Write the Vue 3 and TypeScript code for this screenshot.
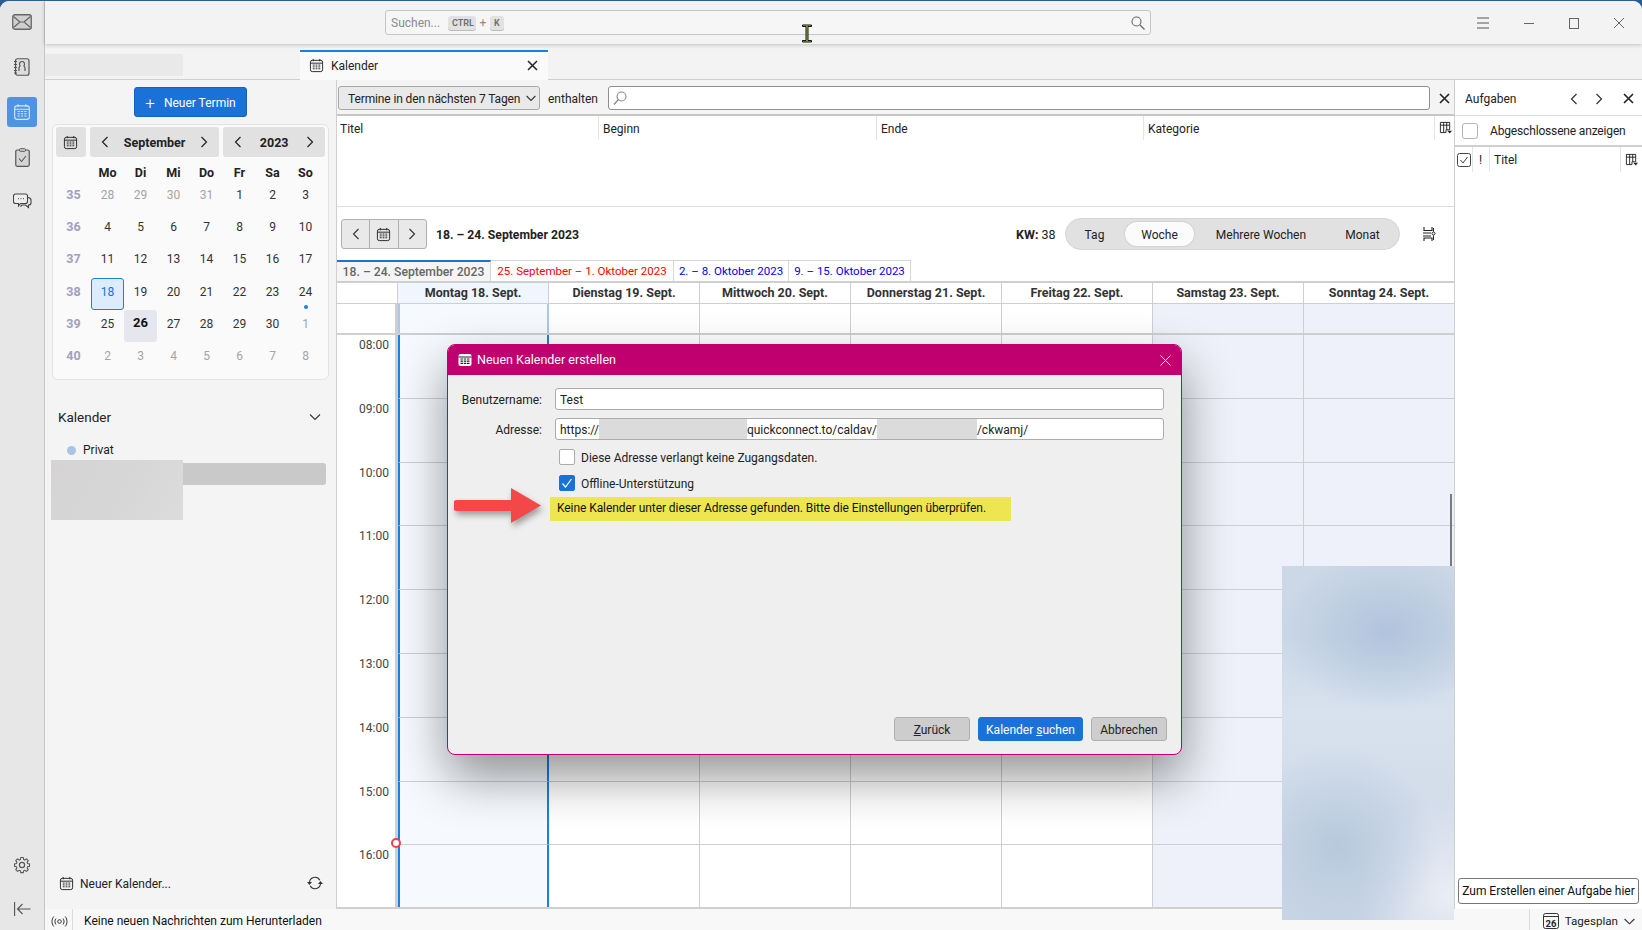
<script setup lang="ts">
const weeks = [
  { kw: 35, days: [[28, 1], [29, 1], [30, 1], [31, 1], [1], [2], [3]] },
  { kw: 36, days: [[4], [5], [6], [7], [8], [9], [10]] },
  { kw: 37, days: [[11], [12], [13], [14], [15], [16], [17]] },
  { kw: 38, days: [[18, 2], [19], [20], [21], [22], [23], [24, 4]] },
  { kw: 39, days: [[25], [26, 3], [27], [28], [29], [30], [1, 1]] },
  { kw: 40, days: [[2, 1], [3, 1], [4, 1], [5, 1], [6, 1], [7, 1], [8, 1]] },
]
const dayClass: Record<number, string> = { 1: 'other', 2: 'sel', 3: 'today', 4: 'dot' }
const names = ['Mo', 'Di', 'Mi', 'Do', 'Fr', 'Sa', 'So']
const columns = ['Montag 18. Sept.', 'Dienstag 19. Sept.', 'Mittwoch 20. Sept.', 'Donnerstag 21. Sept.', 'Freitag 22. Sept.', 'Samstag 23. Sept.', 'Sonntag 24. Sept.']
const hours = ['08:00', '09:00', '10:00', '11:00', '12:00', '13:00', '14:00', '15:00', '16:00']
function colClass(i: number): string {
  return i === 0 ? 'mon' : i >= 5 ? 'wknd' : ''
}
</script>

<template>
  <div class="app">
    <svg class="defs" width="0" height="0">
      <symbol id="cal" viewBox="0 0 16 16">
        <rect x="1.5" y="2.5" width="13" height="12" rx="2" fill="none" stroke="currentColor" />
        <path d="M1.5 5.5h13M4.5 1v2.500M11.500 1v2.500" fill="none" stroke="currentColor" />
        <path d="M4 7.500h2M7 7.500h2M10 7.500h2M4 9.500h2M7 9.500h2M10 9.500h2M4 11.500h2M7 11.500h2M10 11.500h2" stroke="currentColor" fill="none" />
      </symbol>
      <symbol id="cols" viewBox="0 0 14 14">
        <path d="M1.500 1.500h10v8h-4v3h-6zM1.500 4.500h10M5 1.500v11M8.300 1.500v8" fill="none" stroke="currentColor" />
        <path d="M9 10.500h5l-2.500 3z" fill="currentColor" />
      </symbol>
    </svg>

    <div class="window">
      <nav class="rail">
        <button class="rail-btn">
          <svg width="20" height="16" viewBox="0 0 20 16"><rect x="0.750" y="0.750" width="18.500" height="14.500" rx="2" fill="#d0d0d0" stroke="#666" stroke-width="1.300" /><path d="M1.500 2.500 8 8l-6.500 5.500M18.500 2.500 12 8l6.500 5.500M8 8h4" fill="none" stroke="#666" stroke-width="1.200" /></svg>
        </button>
        <button class="rail-btn">
          <svg width="16" height="18" viewBox="0 0 16 18"><rect x="1.500" y="0.750" width="13.500" height="16.500" rx="2" fill="#ddd" stroke="#555" stroke-width="1.200" /><path d="M5 13v-3c0-1 .8-1.500 1-2-1.500-3 .5-4.500 2-4.500s3.500 1.500 2 4.500c.2.500 1 1 1 2v3" fill="none" stroke="#555" stroke-width="1.200" /><path d="M0 3.500h3M0 6.500h3M0 9.500h3M0 12.500h3M0 15h3" stroke="#555" /></svg>
        </button>
        <button class="rail-btn active">
          <svg width="18" height="18" viewBox="0 0 16 16" class="active-ico"><use href="#cal" /></svg>
        </button>
        <button class="rail-btn">
          <svg width="15" height="19" viewBox="0 0 15 19"><rect x="0.750" y="2" width="13.500" height="16.300" rx="1.500" fill="#d4d4d4" stroke="#555" stroke-width="1.200" /><rect x="4.500" y="0.700" width="6" height="2.600" rx="1" fill="#d4d4d4" stroke="#555" /><path d="m4 10.500 2.500 3 4.500-5.500" fill="none" stroke="#555" stroke-width="1.100" /></svg>
        </button>
        <button class="rail-btn">
          <svg width="19" height="18" viewBox="0 0 19 18"><path d="M2.500 1h10a2 2 0 0 1 2 2v5.500a2 2 0 0 1-2 2h-5l-2 2.500v-2.500h-3a2 2 0 0 1-2-2V3a2 2 0 0 1 2-2z" fill="#eee" stroke="#444" stroke-width="1.100" /><path d="M15 4.500c1.800.2 3 1 3 2.500v3c0 1.300-1 2-2.500 2v2.500l-3-2.500H9l-1.500 1.500" fill="none" stroke="#444" stroke-width="1.100" /><path d="M5 5.700h1M7.500 5.700h1M10 5.700h1" stroke="#444" /></svg>
        </button>
        <div class="rail-spacer"></div>
        <button class="rail-btn low">
          <svg width="18" height="18" viewBox="0 0 18 18"><path d="M7.600 1h2.800l.4 2.300 1.300.6 2-1.300 2 2-1.300 2 .6 1.300 2.100.4v2.800l-2.100.4-.6 1.300 1.300 2-2 2-2-1.300-1.300.6-.4 2.100H7.600l-.4-2.100-1.300-.6-2 1.300-2-2 1.300-2-.6-1.300-2.100-.4V8.300l2.100-.4.6-1.300-1.300-2 2-2 2 1.300 1.300-.6z" transform="translate(1.100 .6) scale(.88)" fill="none" stroke="#555" stroke-width="1.200" /><circle cx="9" cy="9" r="2.600" fill="none" stroke="#555" stroke-width="1.200" /></svg>
        </button>
        <button class="rail-btn low last">
          <svg width="17" height="14" viewBox="0 0 17 14"><path d="M.6 0v14M16.500 7H3.500M8.500 2 3.500 7l5 5" fill="none" stroke="#555" stroke-width="1.100" /></svg>
        </button>
      </nav>

      <div class="content">
        <header class="titlebar">
          <div class="searchbar">
            <span class="search-ph">Suchen...</span>
            <kbd class="key first">CTRL</kbd>
            <span class="plus">+</span>
            <kbd class="key">K</kbd>
            <svg class="search-ico" width="14" height="14" viewBox="0 0 14 14"><circle cx="5.500" cy="5.500" r="4.500" fill="none" stroke="#666" stroke-width="1.100" /><path d="m9 9 4.500 4.500" stroke="#666" stroke-width="1.300" /></svg>
          </div>
          <div class="winctl">
            <svg width="14" height="12" viewBox="0 0 14 12"><path d="M1 1h12M1 6h12M1 11h12" stroke="#555" /></svg>
            <svg width="12" height="12" viewBox="0 0 12 12"><path d="M1 6.500h10" stroke="#666" /></svg>
            <svg width="12" height="12" viewBox="0 0 12 12"><rect x="1.500" y="1.500" width="9" height="10" fill="none" stroke="#666" /></svg>
            <svg width="12" height="12" viewBox="0 0 12 12"><path d="m1 1 10 10M11 1 1 11" stroke="#666" /></svg>
          </div>
        </header>

        <div class="tabbar">
          <div class="tab-redacted"></div>
          <div class="tab">
            <svg width="15" height="15"><use href="#cal" /></svg>
            <span class="tab-label">Kalender</span>
            <svg class="tab-x" width="11" height="11" viewBox="0 0 11 11"><path d="m1 1 9 9M10 1l-9 9" stroke="#222" stroke-width="1.500" /></svg>
          </div>
        </div>

        <div class="workspace">
          <aside class="sidebar">
            <button class="new-event"><span class="plus-ico">+</span>Neuer Termin</button>
            <section class="minimonth">
              <div class="mm-top">
                <button class="mm-today"><svg width="15" height="15"><use href="#cal" /></svg></button>
                <div class="mm-nav month">
                  <svg class="chev" width="8" height="12" viewBox="0 0 8 12"><path d="M6.500 1 1.500 6l5 5" fill="none" stroke="#222" stroke-width="1.200" /></svg>
                  <span class="mm-label">September</span>
                  <svg class="chev" width="8" height="12" viewBox="0 0 8 12"><path d="m1.500 1 5 5-5 5" fill="none" stroke="#222" stroke-width="1.200" /></svg>
                </div>
                <div class="mm-nav year">
                  <svg class="chev" width="8" height="12" viewBox="0 0 8 12"><path d="M6.500 1 1.500 6l5 5" fill="none" stroke="#222" stroke-width="1.200" /></svg>
                  <span class="mm-label">2023</span>
                  <svg class="chev" width="8" height="12" viewBox="0 0 8 12"><path d="m1.500 1 5 5-5 5" fill="none" stroke="#222" stroke-width="1.200" /></svg>
                </div>
              </div>
              <div class="mm-grid">
                <span></span>
                <span v-for="n in names" :key="n" class="mm-name">{{ n }}</span>
                <template v-for="w in weeks" :key="w.kw">
                  <span class="mm-kw">{{ w.kw }}</span>
                  <span v-for="(d, i) in w.days" :key="i" class="mm-day" :class="dayClass[d[1] ?? 0]">{{ d[0] }}</span>
                </template>
              </div>
            </section>

            <div class="cal-head">
              <span>Kalender</span>
              <svg width="12" height="8" viewBox="0 0 12 8"><path d="m1 1.500 5 5 5-5" fill="none" stroke="#333" stroke-width="1.100" /></svg>
            </div>
            <div class="cal-item"><i class="cal-dot"></i>Privat</div>
            <div class="cal-redact-wrap">
              <div class="cal-bar"></div>
              <div class="cal-blur"></div>
            </div>

            <div class="side-foot">
              <svg width="15" height="15"><use href="#cal" /></svg>
              <span class="side-foot-label">Neuer Kalender...</span>
              <svg width="16" height="14" viewBox="0 0 16 14"><path d="M2.500 7A5.500 5.500 0 0 1 12.800 4.200M13.500 7A5.500 5.500 0 0 1 3.200 9.800" fill="none" stroke="#333" stroke-width="1.100" /><path d="M0 6h5L2.500 9zM11 8h5l-2.500-3z" fill="#333" /></svg>
            </div>
          </aside>

          <main class="main">
            <div class="filter">
              <div class="select"><span>Termine in den nächsten 7 Tagen</span>
                <svg width="10" height="7" viewBox="0 0 10 7"><path d="m.6 1 4.400 4.500L9.400 1" fill="none" stroke="#333" stroke-width="1.100" /></svg>
              </div>
              <span class="contains">enthalten</span>
              <div class="filter-input">
                <svg width="14" height="14" viewBox="0 0 14 14"><circle cx="8.500" cy="5.500" r="4.500" fill="none" stroke="#888" stroke-width="1.100" /><path d="m5 9-4 4.500" stroke="#888" stroke-width="1.300" /></svg>
              </div>
              <svg class="filter-x" width="11" height="11" viewBox="0 0 11 11"><path d="m1 1 9 9M10 1l-9 9" stroke="#222" stroke-width="1.600" /></svg>
            </div>
            <div class="list">
              <div class="list-head">
                <span class="lc c1">Titel</span>
                <span class="lc c2">Beginn</span>
                <span class="lc c3">Ende</span>
                <span class="lc c4">Kategorie</span>
                <span class="lc c5"><svg width="13" height="13"><use href="#cols" /></svg></span>
              </div>
            </div>
            <div class="navrow">
              <div class="navbtns">
                <span class="navbtn"><svg width="8" height="12" viewBox="0 0 8 12"><path d="M6.500 1 1.500 6l5 5" fill="none" stroke="#333" stroke-width="1.100" /></svg></span>
                <span class="navbtn"><svg width="15" height="15"><use href="#cal" /></svg></span>
                <span class="navbtn"><svg width="8" height="12" viewBox="0 0 8 12"><path d="m1.500 1 5 5-5 5" fill="none" stroke="#333" stroke-width="1.100" /></svg></span>
              </div>
              <strong class="range">18. – 24. September 2023</strong>
              <span class="kw"><b>KW:</b> 38</span>
              <div class="views">
                <span class="view v-tag">Tag</span>
                <span class="view v-woche">Woche</span>
                <span class="view v-multi">Mehrere Wochen</span>
                <span class="view v-monat">Monat</span>
              </div>
              <svg class="layout-ico" width="13" height="14" viewBox="0 0 13 14"><path d="M1 0v3.500h8V0M0 6h8M0 9h8M1 14v-3h8v3" fill="none" stroke="#222" stroke-width="1.100" /><path d="M10.500 1v3.500M10.500 8.500V13" stroke="#222" /><circle cx="10.500" cy="6.500" r="1.500" fill="none" stroke="#222" /></svg>
            </div>
            <div class="weektabs">
              <span class="wt wt0">18. – 24. September 2023</span>
              <span class="wt wt1">25. September – 1. Oktober 2023</span>
              <span class="wt wt2">2. – 8. Oktober 2023</span>
              <span class="wt wt3">9. – 15. Oktober 2023</span>
            </div>
            <div class="week">
              <div class="w-row w-head">
                <div class="w-time"></div>
                <div v-for="(c, i) in columns" :key="c" class="w-cell" :class="i === 0 ? 'mon-head' : ''">{{ c }}</div>
              </div>
              <div class="w-row w-allday">
                <div class="w-time"></div>
                <div v-for="(c, i) in columns" :key="c" class="w-cell" :class="colClass(i)"></div>
              </div>
              <div class="w-scroll">
                <div v-for="h in hours" :key="h" class="w-row w-hour">
                  <div class="w-time"><span>{{ h }}</span></div>
                  <div v-for="(c, i) in columns" :key="c" class="w-cell" :class="colClass(i)"></div>
                </div>
                <i class="now-dot"></i>
                <i class="scrollbar"></i>
              </div>
            </div>
          </main>

          <aside class="today">
            <div class="today-head">
              <span class="today-title">Aufgaben</span>
              <svg width="8" height="12" viewBox="0 0 8 12"><path d="M6.500 1 1.500 6l5 5" fill="none" stroke="#333" stroke-width="1.200" /></svg>
              <svg width="8" height="12" viewBox="0 0 8 12"><path d="m1.500 1 5 5-5 5" fill="none" stroke="#333" stroke-width="1.200" /></svg>
              <svg width="11" height="11" viewBox="0 0 11 11"><path d="m1 1 9 9M10 1l-9 9" stroke="#222" stroke-width="1.600" /></svg>
            </div>
            <div class="today-done"><i class="box"></i>Abgeschlossene anzeigen</div>
            <div class="today-cols">
              <span class="tc t1"><svg width="14" height="14" viewBox="0 0 14 14"><rect x="0.500" y="0.500" width="13" height="13" rx="2" fill="none" stroke="#444" /><path d="m3.500 7 2.500 3 4.500-6" fill="none" stroke="#444" /></svg></span>
              <span class="tc t2">!</span>
              <span class="tc t3">Titel</span>
              <span class="tc t4"><svg width="13" height="13"><use href="#cols" /></svg></span>
            </div>
            <div class="today-fill"></div>
            <div class="today-input">Zum Erstellen einer Aufgabe hier</div>
          </aside>
        </div>

        <footer class="status">
          <svg class="st-ico" width="17" height="11" viewBox="0 0 17 11"><circle cx="8.500" cy="5.500" r="1.800" fill="none" stroke="#333" /><path d="M5 2.500c-1.400 1.700-1.400 4.300 0 6M12 2.500c1.400 1.700 1.400 4.300 0 6M2.800 .5c-2.400 3-2.400 7 0 10M14.200 .5c2.400 3 2.400 7 0 10" fill="none" stroke="#333" /></svg>
          <span class="st-text">Keine neuen Nachrichten zum Herunterladen</span>
          <span class="st-right">
            <svg width="16" height="16" viewBox="0 0 16 16"><rect x="0.500" y="0.500" width="15" height="15" rx="2" fill="none" stroke="#333" /><path d="M.5 3.500h15" stroke="#333" /><text x="8" y="13.500" text-anchor="middle" font-size="9.500" font-weight="700" font-family="Roboto, sans-serif" fill="#222">26</text></svg>
            <span class="st-plan">Tagesplan</span>
            <svg width="11" height="7" viewBox="0 0 11 7"><path d="m.6 1 4.900 4.800L10.400 1" fill="none" stroke="#333" stroke-width="1.100" /></svg>
          </span>
        </footer>
      </div>
    </div>

    <div class="blur-side"></div>

    <div class="dialog">
      <div class="dlg-head">
        <svg width="14" height="14" viewBox="0 0 14 14"><rect x="0.500" y="1" width="13" height="12" rx="2" fill="#fff" /><path d="M.5 4h13" stroke="#222" /><path d="M2.500 6h2.500M5.800 6h2.500M9 6h2.500M2.500 8.200h2.500M5.800 8.200h2.500M9 8.200h2.500M2.500 10.400h2.500M5.800 10.400h2.500M9 10.400h2.500" stroke="#222" stroke-width="1.200" /></svg>
        <span class="dlg-title">Neuen Kalender erstellen</span>
        <svg class="dlg-x" width="11" height="11" viewBox="0 0 11 11"><path d="m.5.500 10 10M10.500.500l-10 10" stroke="#fff" /></svg>
      </div>
      <div class="dlg-body">
        <div class="dlg-form">
          <label class="dlg-label">Benutzername:</label>
          <div class="dlg-input">Test</div>
          <label class="dlg-label">Adresse:</label>
          <div class="dlg-input">https://<i class="red r1"></i>quickconnect.to/caldav/<i class="red r2"></i>/ckwamj/</div>
        </div>
        <div class="dlg-check first"><i class="cb"></i>Diese Adresse verlangt keine Zugangsdaten.</div>
        <div class="dlg-check second">
          <i class="cb on"><svg width="14" height="12" viewBox="0 0 14 12"><path d="m2.500 6.500 3 3.500 6-8" fill="none" stroke="#fff" stroke-width="1.200" /></svg></i>Offline-Unterstützung
        </div>
        <div class="dlg-error">Keine Kalender unter dieser Adresse gefunden. Bitte die Einstellungen überprüfen.</div>
        <div class="dlg-foot">
          <button class="dbtn w76"><u>Z</u>urück</button>
          <button class="dbtn primary">Kalender <u>s</u>uchen</button>
          <button class="dbtn w76">Abbrechen</button>
        </div>
      </div>
      <svg class="arrow" width="96" height="42" viewBox="0 0 96 42">
        <path d="M3 15h54V3l30 17.500L57 38V26H3a5.500 5.500 0 0 1 0-11z" fill="#f44848" />
      </svg>
    </div>

    <svg class="ibeam" width="12" height="19" viewBox="0 0 12 19"><path d="M1.500 1h9v1.500H7v14h3.500V18h-9v-1.500H5v-14H1.500z" fill="#9acd32" stroke="#111" stroke-width="1" /></svg>
  </div>
</template>

<style>
html, body { margin: 0; background: #fff; }
</style>

<style scoped>
.app {
  position: relative;
  width: 1642px;
  height: 930px;
  overflow: hidden;
  background: #2b5f92;
  font-family: Roboto, "Liberation Sans", sans-serif;
  font-size: 12px;
  color: #222;
  padding-top: 1px;
  box-sizing: border-box;
}
.defs { position: absolute; }
button { font: inherit; color: inherit; border: none; background: none; padding: 0; }
svg { display: block; flex: none; }
.window { display: flex; height: 929px; border-radius: 9px 9px 0 0; overflow: hidden; background: #f3f3f3; }

.rail {
  width: 44px;
  flex: none;
  background: #e7e7e7;
  border-right: 1px solid #c6c6c6;
  display: flex;
  flex-direction: column;
  align-items: center;
  padding-top: 6px;
  gap: 15px;
}
.rail-btn { width: 30px; height: 30px; display: flex; align-items: center; justify-content: center; border-radius: 3px; }
.rail-btn.active { background: #4e94e3; }
.active-ico { color: #d6e6fa; }
.rail-spacer { flex: 1; }
.rail-btn.low { margin-top: -1px; }
.rail-btn.last { margin-bottom: 6px; }

.content { flex: 1; min-width: 0; display: flex; flex-direction: column; }
.titlebar {
  height: 43px;
  flex: none;
  display: flex;
  align-items: center;
  background: #f3f3f3;
  box-shadow: 0 1px 4px rgba(0, 0, 0, .22);
  position: relative;
  z-index: 2;
}
.searchbar {
  margin-left: 340px;
  width: 766px;
  height: 25px;
  box-sizing: border-box;
  border: 1px solid #c6c6c6;
  border-radius: 3px;
  background: #f6f6f6;
  display: flex;
  align-items: center;
  padding: 0 5px;
  color: #8b8b8b;
}
.search-ph { font-size: 12px; width: 57px; }
.key { font: 600 9px Roboto, sans-serif; background: #e2e2e2; border-radius: 3px; height: 14px; line-height: 14px; padding: 0 4px; color: #6d6d6d; box-shadow: 0 1px 0 #bbb; }
.key.first { width: 20px; text-align: center; }
.plus { width: 14px; text-align: center; }
.search-ico { margin-left: auto; }
.winctl { margin-left: 325px; display: flex; gap: 33px; align-items: center; }

.tabbar { height: 36px; flex: none; display: flex; align-items: flex-end; background: #f3f3f3; border-bottom: 1px solid #cfcfcf; box-sizing: border-box; }
.tab-redacted { width: 138px; height: 22px; background: #e9e9e9; margin-bottom: 3px; }
.tab {
  width: 248px;
  height: 30px;
  margin-left: 117px;
  margin-bottom: -1px;
  background: #fafafa;
  border-top: 2px solid #1a80e5;
  box-sizing: border-box;
  display: flex;
  align-items: center;
  padding: 0 10px 1px 9px;
  position: relative;
  z-index: 1;
}
.tab-label { margin-left: 7px; flex: 1; padding-top: 1px; }

.workspace { flex: 1; min-height: 0; display: flex; }

.sidebar { width: 291px; flex: none; background: #f4f4f4; border-right: 1px solid #cfcfcf; display: flex; flex-direction: column; position: relative; }
.new-event {
  align-self: center;
  width: 113px;
  height: 30px;
  margin-top: 7px;
  padding-top: 2px;
  background: #1a72d9;
  color: #fff;
  border: 1px solid #1560b8;
  border-radius: 3px;
  display: flex;
  align-items: center;
  justify-content: center;
  box-sizing: border-box;
}
.plus-ico { font-size: 17px; font-weight: 300; margin-right: 9px; line-height: 1; }
.minimonth {
  margin: 7px 7px 0;
  height: 256px;
  box-sizing: border-box;
  background: #fafafa;
  border: 1px solid #e3e3e3;
  border-radius: 6px;
  padding: 2px 3px;
}
.mm-top { display: flex; gap: 4px; }
.mm-today { width: 30px; height: 30px; background: #e1e1e1; border-radius: 3px; display: flex; align-items: center; justify-content: center; }
.mm-nav { height: 30px; background: #e1e1e1; border-radius: 3px; display: flex; align-items: center; justify-content: space-between; padding: 0 11px; box-sizing: border-box; }
.mm-nav.month { width: 130px; }
.mm-nav.year { width: 102px; }
.mm-label { font-weight: 700; font-size: 12.500px; }
.mm-grid { display: grid; grid-template-columns: 35px repeat(7, 33px); grid-template-rows: 22px repeat(6, 32.200px); margin-top: 2px; text-align: center; }
.mm-name { font-weight: 700; font-size: 12.500px; line-height: 28px; }
.mm-kw { color: #a0a0c0; font-weight: 700; font-size: 12.500px; padding-top: 6px; box-sizing: border-box; }
.mm-day { padding-top: 6px; box-sizing: border-box; position: relative; color: #333; border: 1px solid transparent; border-radius: 3px; }
.mm-day.other { color: #a4a4a4; }
.mm-day.sel { background: #dcecfc; border-color: #1b80e6; color: #1373d9; }
.mm-day.today { background: #e6e6ef; font-weight: 700; color: #111; font-size: 13px; padding-top: 4px; }
.mm-day.dot::after { content: ""; position: absolute; width: 4px; height: 4px; border-radius: 50%; background: #1b80e6; left: 14px; top: 26px; }

.cal-head { margin: 27px 15px 0 13px; display: flex; justify-content: space-between; align-items: center; font-size: 13.500px; height: 20px; }
.cal-item { margin: 15px 0 0 22px; display: flex; align-items: center; gap: 7px; height: 16px; }
.cal-dot { width: 9px; height: 9px; border-radius: 50%; background: #a9c3e3; }
.cal-redact-wrap { position: relative; margin: 5px 10px 0 6px; }
.cal-bar { height: 22px; border-radius: 3px; background: #c9c9c9; }
.cal-blur { position: absolute; left: 0; top: -3px; width: 132px; height: 60px; background: linear-gradient(120deg, #d5d3d4, #d7d7d7 60%, #dcdcdc); }
.side-foot { margin-top: auto; padding: 0 13px 18px 14px; display: flex; align-items: center; height: 16px; }
.side-foot-label { margin-left: 6px; flex: 1; padding-top: 1px; }

.main { width: 1118px; flex: none; box-sizing: border-box; border-right: 1px solid #cfcfcf; background: #fff; display: flex; flex-direction: column; }
.filter { height: 36px; flex: none; box-sizing: border-box; background: #f4f4f4; border-bottom: 2px solid #c6c6c6; display: flex; align-items: center; padding: 2px 0 0 1px; }
.select { width: 202px; height: 24px; box-sizing: border-box; background: #e9e9e9; border: 1px solid #a8a8a8; border-radius: 3px; display: flex; align-items: center; justify-content: space-between; padding: 0 3px 0 9px; white-space: nowrap; letter-spacing: -.12px; }
.select span { padding-top: 1px; }
.contains { margin-left: 8px; width: 60px; padding-top: 1px; }
.filter-input { width: 822px; height: 24px; box-sizing: border-box; background: #fff; border: 1px solid #8e8e8e; border-radius: 3px; display: flex; align-items: center; padding-left: 4px; }
.filter-x { margin-left: 9px; }
.list { height: 91px; flex: none; box-sizing: border-box; border-bottom: 1px solid #ddd; }
.list-head { display: flex; height: 24px; }
.lc { box-sizing: border-box; padding: 6px 0 0 3px; border-right: 1px solid #e4e4e4; }
.c1 { width: 262px; }
.c2 { width: 278px; padding-left: 4px; }
.c3 { width: 267px; padding-left: 4px; }
.c4 { width: 291px; padding-left: 4px; }
.c5 { flex: 1; border: none; padding: 5px 0 0 4px; }
.navrow { height: 53px; flex: none; display: flex; align-items: center; box-sizing: border-box; padding: 1px 0 0 4px; position: relative; }
.navbtns { display: flex; width: 86px; height: 30px; box-sizing: border-box; border: 1px solid #b0b0b0; border-radius: 3px; background: #e9e9e9; }
.navbtn { flex: 1; display: flex; align-items: center; justify-content: center; border-right: 1px solid #b0b0b0; }
.navbtn:last-child { border: none; }
.range { margin-left: 9px; font-size: 12.200px; width: 580px; font-weight: 700; padding-top: 1px; }
.kw { width: 49px; font-size: 12.500px; padding-top: 1px; }
.kw b { font-weight: 700; }
.views { width: 335px; height: 32px; box-sizing: border-box; background: #e1e1e1; border: 1px solid #d6d6d6; border-radius: 16px; display: flex; align-items: center; }
.view { text-align: center; padding-top: 1px; }
.v-tag { width: 57px; }
.v-woche { width: 69px; height: 24px; box-sizing: border-box; line-height: 24px; margin-left: 2px; background: #fbfbfb; border-radius: 12px; box-shadow: 0 0 2px rgba(0, 0, 0, .2); }
.v-multi { width: 134px; }
.v-monat { width: 69px; }
.layout-ico { margin-left: 23px; }
.weektabs { height: 21px; flex: none; display: flex; font-size: 11.500px; }
.wt { box-sizing: border-box; border-right: 1px solid #d6d6d6; border-top: 1px solid #d6d6d6; padding-top: 3px; text-align: center; }
.wt0 { width: 154px; background: #f5f5f5; color: #666; border-top: 2px solid #1a72d9; font-weight: 500; font-size: 12.200px; padding-top: 2.500px; }
.wt1 { width: 183px; color: #f00; }
.wt2 { width: 115px; color: #00f; }
.wt3 { width: 122px; color: #00f; }
.week { flex: 1; min-height: 0; display: flex; flex-direction: column; border-top: 2px solid #cfcfcf; border-bottom: 2px solid #cfcfcf; overflow: hidden; }
.w-row { display: grid; grid-template-columns: 61px repeat(6, 151px) 150px; flex: none; }
.w-time { box-sizing: border-box; border-right: 3px solid #cfcfcf; }
.w-cell { box-sizing: border-box; border-right: 1px solid #cfcfcf; }
.w-cell:last-child { border-right: none; }
.w-head { height: 20px; border-bottom: 1px solid #cfcfcf; }
.w-head .w-time { border-right-width: 1px; }
.w-head .w-cell { text-align: center; font-weight: 700; color: #333; font-size: 12.500px; line-height: 19px; }
.w-cell.mon-head { background: #f0f6fe; }
.w-cell.mon { background: #f6f9fe; border-right: 2px solid #1a80e5; border-left: 2px solid #1a80e5; }
.w-cell.wknd { background: #eef1f9; }
.w-allday { height: 29px; }
.w-allday .w-cell.mon { border-left-color: #a8c8ec; border-right-color: #a8c8ec; }
.w-scroll { flex: 1; min-height: 0; overflow: hidden; position: relative; border-top: 2px solid #cfcfcf; }
.w-hour { height: 63.800px; }
.w-hour .w-cell { border-bottom: 1px solid #cfcfcf; }
.w-hour .w-time { text-align: right; padding: 3px 6px 0 0; color: #444; }
.w-hour .w-cell.mon { background: #f6f9fe; }
.now-dot { position: absolute; left: 54px; top: 503px; width: 10px; height: 10px; box-sizing: border-box; background: #fff; border: 2px solid #f04050; border-radius: 50%; }
.scrollbar { position: absolute; left: 1113px; top: 159px; width: 2px; height: 72px; background: #7a7a7a; }

.today { flex: 1; min-width: 0; background: #fff; display: flex; flex-direction: column; }
.today-head { height: 36px; flex: none; box-sizing: border-box; border-bottom: 1px solid #ddd; display: flex; align-items: center; padding: 2px 8px 0 10px; }
.today-title { flex: 1; }
.today-head svg:nth-of-type(2) { margin: 0 20px 0 17px; }
.today-done { height: 31px; flex: none; box-sizing: border-box; border-bottom: 2px solid #cfcfcf; display: flex; align-items: center; padding-left: 7px; letter-spacing: -.16px; }
.box { width: 16px; height: 16px; box-sizing: border-box; border: 1px solid #b4b4b4; border-radius: 3px; margin-right: 12px; }
.today-cols { height: 25px; flex: none; display: flex; align-items: center; }
.tc { height: 25px; display: flex; align-items: center; box-sizing: border-box; border-right: 1px solid #e4e4e4; }
.t1 { width: 18px; padding-left: 2px; }
.t2 { width: 17px; padding-left: 6px; }
.t3 { flex: 1; padding-left: 4px; }
.t4 { width: 21px; border: none; padding-left: 4px; }
.today-fill { flex: 1; }
.today-input { height: 26px; margin: 0 3px 5px; box-sizing: border-box; border: 1px solid #777; border-radius: 3px; background: #fff; display: flex; align-items: center; justify-content: center; color: #111; white-space: nowrap; letter-spacing: -.03px; }

.status { height: 21px; flex: none; background: #f8f8f8; display: flex; align-items: center; position: relative; box-sizing: border-box; }
.st-ico { margin: 3px 0 0 6px; }
.st-text { margin-left: 4px; padding-left: 11px; border-left: 1px solid #dcdcdc; height: 21px; line-height: 24px; color: #111; }
.st-right { margin-left: auto; display: flex; align-items: center; height: 21px; box-sizing: border-box; padding: 3px 0 0 13px; border-left: 1px solid #dcdcdc; margin-right: 7px; }
.st-plan { margin: 0 6px; font-size: 11.600px; }

.blur-side {
  position: absolute;
  left: 1282px;
  top: 566px;
  width: 172px;
  height: 354px;
  background:
    radial-gradient(ellipse 110px 80px at 105px 65px, #b1c4dd 0, rgba(177, 196, 221, 0) 100%),
    radial-gradient(ellipse 100px 100px at 55px 280px, #b8c9dd 0, rgba(184, 201, 221, 0) 100%),
    radial-gradient(ellipse 90px 100px at 165px 330px, #e9edf5 0, rgba(233, 237, 245, 0) 100%),
    linear-gradient(180deg, #cdd8e6 0, #ccd8e7 20%, #d8e2ee 42%, #d4deeb 60%, #cad6e6 100%);
}

.dialog {
  position: absolute;
  z-index: 3;
  left: 447px;
  top: 344px;
  width: 735px;
  height: 411px;
  box-sizing: border-box;
  border: 1px solid #c0006f;
  border-radius: 8px;
  background: #efefef;
  box-shadow: 0 22px 50px rgba(0, 0, 0, .42);
  display: flex;
  flex-direction: column;
}
.dlg-head { height: 30px; flex: none; background: #c0006f; color: #fff; display: flex; align-items: center; padding: 0 10px; border-radius: 7px 7px 0 0; font-size: 12.500px; }
.dlg-title { margin-left: 5px; flex: 1; padding-bottom: 1px; }
.dlg-body { flex: 1; display: flex; flex-direction: column; padding: 13px 0 13px; }
.dlg-form { display: grid; grid-template-columns: 94px 609px; column-gap: 13px; row-gap: 8px; align-items: center; }
.dlg-label { text-align: right; padding-top: 2px; }
.dlg-input { height: 22px; box-sizing: border-box; background: #fff; border: 1px solid #ababab; border-radius: 3px; padding: 1px 0 0 4px; display: flex; align-items: center; white-space: nowrap; }
.red { display: block; height: 20px; margin-top: -1px; background: #dbdbdb; }
.r1 { width: 148px; }
.r2 { width: 100px; }
.dlg-check { display: flex; align-items: center; margin-left: 111px; padding-top: 2px; }
.dlg-check.first { margin-top: 9px; }
.dlg-check.second { margin-top: 10px; }
.cb { width: 16px; height: 16px; box-sizing: border-box; background: #fff; border: 1px solid #ababab; border-radius: 2px; margin: -2px 6px 0 0; display: flex; align-items: center; justify-content: center; }
.cb.on { background: #1a72d9; border-color: #1a72d9; }
.dlg-error { margin: 6px 0 0 102px; width: 461px; height: 24px; box-sizing: border-box; background: #ede650; padding: 0 0 3px 7px; display: flex; align-items: center; color: #111; letter-spacing: -.07px; white-space: nowrap; }
.dlg-foot { margin-top: auto; display: flex; justify-content: flex-end; gap: 8px; padding-right: 14px; }
.dbtn { height: 24px; box-sizing: border-box; background: #cdcdcd; border: 1px solid #b0b0b0; border-radius: 3px; padding-top: 2px; }
.w76 { width: 76px; }
.dbtn.primary { width: 105px; background: #1a72d9; border-color: #1a72d9; color: #fff; }
.arrow { position: absolute; left: 6px; top: 140px; filter: drop-shadow(2px 4px 3px rgba(0, 0, 0, .35)); }

.ibeam { position: absolute; z-index: 4; left: 801px; top: 24px; }
</style>
